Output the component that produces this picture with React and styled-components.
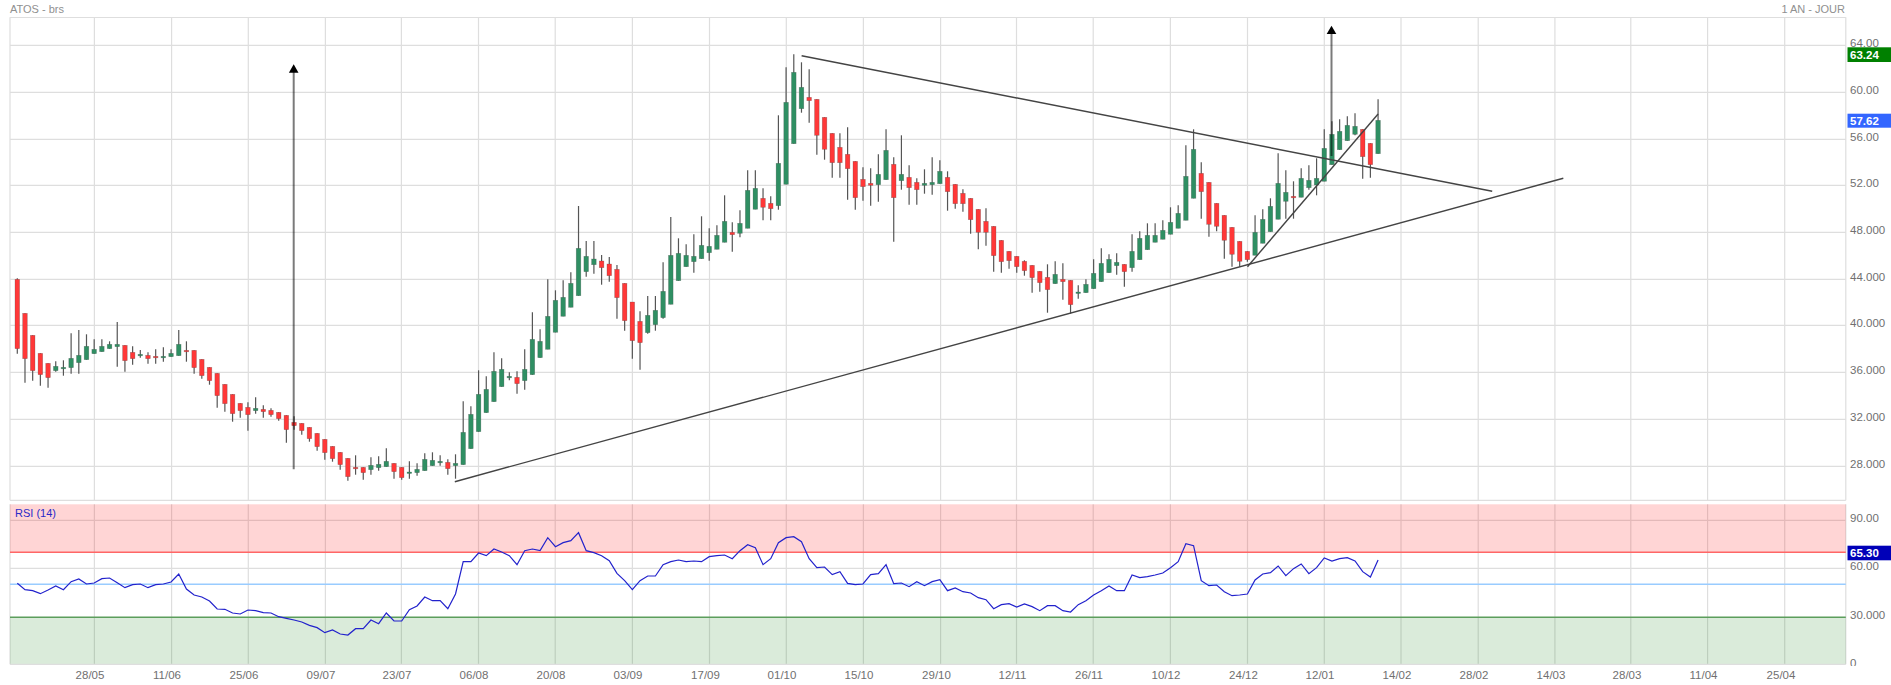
import React from "react";
import styled, { createGlobalStyle } from "styled-components";

const GlobalStyle = createGlobalStyle`
  html, body {
    margin: 0;
    padding: 0;
    background: #fff;
    overflow: hidden;
  }
`;

const Page = styled.div`
  width: 1891px;
  height: 685px;
  display: flex;
  flex-direction: column;
  font-family: "Liberation Sans", Arial, sans-serif;
`;

const Header = styled.div`
  height: 17px;
  display: flex;
  align-items: center;
  justify-content: space-between;
  padding: 0 46px 0 10px;
  font-size: 11px;
  color: #909090;
`;

const Panel = styled.svg`
  display: block;
  flex: none;
  font-family: "Liberation Sans", Arial, sans-serif;
`;

const GridLine = styled.line`
  stroke: #dedede;
  stroke-width: 1.2;
`;

const Band = styled.rect`
  fill: ${(p) => (p.$tone === "red" ? "rgba(255,0,0,.165)" : "rgba(0,120,0,.145)")};
`;

const Level = styled.line`
  stroke: ${(p) => p.$color};
  stroke-width: 1.4;
`;

const Wick = styled.line`
  stroke: #555;
  stroke-width: 1.2;
`;

const Body = styled.rect`
  fill: ${(p) => (p.$up ? "#2f8f63" : "#ff3838")};
  stroke: rgba(70, 70, 70, 0.4);
  stroke-width: 0.6;
`;

const TrendLine = styled.line`
  stroke: #444;
  stroke-width: 1.4;
`;

const ArrowShaft = styled.line`
  stroke: rgba(0, 0, 0, 0.52);
  stroke-width: 2;
`;

const AxisLabel = styled.text`
  fill: #707070;
  font-size: 11.5px;
`;

const BadgeBox = styled.rect`
  fill: ${(p) => p.$color};
`;

const BadgeText = styled.text`
  fill: #fff;
  font-size: 11.5px;
  font-weight: bold;
`;

const RsiTitle = styled.text`
  fill: #2a2ac8;
  font-size: 11px;
`;

const RsiTrace = styled.polyline`
  fill: none;
  stroke: #2222cc;
  stroke-width: 1.2;
`;

const LEFT = 10;
const RIGHT = 1845.8;
const TOP = 17.3;
const BOTTOM = 500.3;
const RSI_TOP = 504.3;
const RSI_BOTTOM = 664.3;

const barX = (i) => 17.3 + 7.688 * i;

const verticals = [
  LEFT, 94.4, 171.6, 248.3, 325.4, 401.4, 478.5, 555.2, 632.4, 709.5, 786.3,
  863.4, 940.6, 1016.5, 1093.2, 1170.4, 1247.5, 1324.3, 1401, 1478.2, 1554.9,
  1630.8, 1707.6, 1784.7, RIGHT,
];

const priceLevels = [
  ["64.00", 45.3], ["60.00", 92.3], ["56.00", 139.3], ["52.00", 185.3],
  ["48.000", 232.3], ["44.000", 279.3], ["40.000", 325.3], ["36.000", 372.3],
  ["32.000", 419.3], ["28.000", 466.3],
];

const rsiLevels = [
  ["90.00", 520.3], ["60.00", 568.3], ["30.000", 617], ["0", 664.5],
];

const dates = [
  ["28/05", 90], ["11/06", 167], ["25/06", 244], ["09/07", 321], ["23/07", 397],
  ["06/08", 474], ["20/08", 551], ["03/09", 628], ["17/09", 705.5], ["01/10", 782],
  ["15/10", 859], ["29/10", 936.5], ["12/11", 1012.5], ["26/11", 1089], ["10/12", 1166],
  ["24/12", 1243.5], ["12/01", 1320], ["14/02", 1397], ["28/02", 1474], ["14/03", 1551],
  ["28/03", 1627], ["11/04", 1703.5], ["25/04", 1781],
];

// up, wick top, body top, body bottom, wick bottom (page y)
const candles = [
  [0,278.3,279.3,348.7,353.7],[0,313.3,313.3,358.7,382.7],[0,335.3,335.3,370.7,380.7],[0,353.3,353.3,374.7,385.7],
  [0,363.3,363.3,377.7,387.7],[1,361.3,366.3,370.7,371.7],[1,360.3,367.3,368.7,375.7],[1,333.3,358.3,367.7,373.7],
  [1,330,355.3,362.7,373.7],[1,334.3,346.3,359.7,359.7],[1,339.3,349.3,353.7,353.7],[1,339.3,346.3,351.7,351.7],
  [1,341.3,344.3,348.7,348.7],[1,322,344.3,346.7,366.7],[0,345.3,345.3,360.7,371.7],[0,346.3,352.3,358.7,364.7],
  [1,350,354.3,355.7,357.7],[0,352.3,355.3,358.7,363.7],[0,349.3,356.3,357.7,363.7],[1,347.3,356.3,357.7,361.7],
  [1,349.3,353.3,356.7,356.7],[1,330,344.3,355.7,355.7],[0,341.3,350.3,351.7,361.7],[0,350.3,350.3,367.7,373.7],
  [0,359.3,359.3,375.7,378.7],[0,367.3,367.3,380.7,384.7],[0,373.3,373.3,395.7,407.7],[0,384.3,384.3,403.7,411.7],
  [0,394.3,394.3,413.7,421.7],[0,403.3,403.3,410.7,417.7],[0,402.3,407.3,414.7,430.7],[1,397.3,408.3,410.7,413.7],
  [0,405.3,409.3,411.7,417.7],[0,408.3,410.3,414.7,416.7],[0,412.3,412.3,418.7,420.7],[0,415.3,415.3,429.7,442.7],
  [0,416.3,422.3,425.7,429.7],[0,423.3,423.3,430.7,434.7],[0,427.3,427.3,438.7,441.7],[0,433.3,433.3,446.7,450.7],
  [0,439.3,439.3,452.7,459.7],[0,446.3,446.3,458.7,461.7],[0,452.3,452.3,464.7,469.7],[0,458.3,458.3,476.7,480.7],
  [0,455.3,467.3,468.7,474.7],[0,467.3,467.3,472.7,479.7],[1,457.3,465.3,469.7,474.7],[1,456.3,464.3,467.7,470.7],
  [1,448.3,461.3,466.7,466.7],[0,463.3,463.3,471.7,478.7],[0,467.3,467.3,477.7,479.7],[1,461.3,472,472.7,478.7],
  [1,463.3,469.3,472.7,475.7],[1,453.3,459.3,470.7,470.7],[1,452.3,460.3,465.7,465.7],[1,455.3,461.3,462.7,465.7],
  [0,459.3,462.3,468.7,474.7],[1,454.3,463.3,465.7,478.7],[1,401.3,432.3,464.7,464.7],[1,406.3,414.3,448.7,448.7],
  [1,370.3,394.3,431.7,431.7],[1,376.3,389.3,412.7,412.7],[1,352.3,371.3,401.7,401.7],[1,358.3,369.3,386.7,386.7],
  [1,372.3,376.3,377.7,380.3],[0,371.3,377.3,383.7,393.7],[1,349.3,369.3,380.7,389.7],[1,312.3,339.3,374.7,374.7],
  [1,329.3,341.3,357.7,357.7],[1,279.3,316.3,349.3,349.3],[1,290.3,300.3,332.3,332.3],[1,280.3,297.3,316.3,316.3],
  [1,272.3,283.3,307.3,307.3],[1,206,248.3,295.7,295.7],[1,241,256.3,271.7,276.7],[1,241,259,264.7,273.7],
  [0,255,261,267.7,284.7],[0,257,264,275.7,281.7],[0,265,269.3,297.7,318.7],[0,283.3,283.3,320.7,330.7],
  [0,302,302,340.7,358.7],[0,311.3,321.3,342.7,369.7],[1,296,315.3,332.7,333.7],[1,296,310.3,324.7,330.7],
  [1,262.3,291.3,317.7,318.7],[1,217,255.3,304.3,304.3],[1,238.3,253.3,280.7,280.7],[1,244.3,255.3,266.7,266.7],
  [1,234.3,256.3,261.7,272.7],[1,216.3,245.3,258.7,258.7],[1,228.3,246.3,252.7,260.7],[1,225.3,235.3,249.3,249.3],
  [1,195.3,221.3,242.3,242.3],[0,222.3,232.3,234.7,251.7],[1,210.3,223.3,233.3,237.3],[1,170.3,190.3,228.3,228.3],
  [1,170.3,188.3,209.3,209.3],[0,188.3,198.3,207.3,220.3],[0,196.3,203.3,208.7,220.3],[1,115.3,163.3,205.7,209.7],
  [1,67.3,102.3,184.3,184.3],[1,54.3,72.3,143.7,143.7],[1,62.3,87.3,108.7,112.7],[0,69.3,97.3,100.7,122.7],
  [0,99.3,99.3,135.3,154.7],[0,117.3,117.3,149.3,159.7],[0,133.3,133.3,162.7,177.7],[0,133.3,147.3,162.7,177.7],
  [0,127.3,154.3,168.7,199.7],[0,161.3,161.3,197.7,209.7],[0,167.3,179.3,186.7,200.7],[0,168.3,183.3,185.3,205.7],
  [1,154.3,174.3,184.7,201.7],[1,129.3,150.3,179.7,179.7],[0,157.3,164.3,197.7,241.7],[1,135.3,174.3,180.7,189.7],
  [0,165.3,177.3,187.7,204.7],[0,178.3,182.3,189.7,204.7],[1,169.3,183.3,185.3,193.7],[1,157.3,182.3,184.7,194.7],
  [1,160.3,171.3,183.7,183.7],[0,171.3,177.3,191.7,210.7],[0,184.3,184.3,203.7,208.7],[0,189.3,193.3,203.7,211.7],
  [0,198.3,198.3,219.7,233.7],[0,209.3,209.3,232.3,249.3],[0,208.3,221.3,232.3,245.7],[0,226.3,226.3,255.7,271.7],
  [0,240.3,240.3,261.7,272.7],[0,251.3,251.3,260.7,268.7],[0,256.3,256.3,266.7,272.7],[0,260.3,261.3,270.7,275.7],
  [0,265.3,265.3,277.7,292.7],[0,271.3,271.3,282.7,291.7],[0,264.3,277.3,289.7,312.7],[1,261.3,274.3,283.7,283.7],
  [0,263.3,279.3,281.7,299.7],[0,280.3,280.3,304.7,313.7],[1,285.3,292,292.7,298.7],[1,279.3,284.3,292.7,292.7],
  [1,259.3,273.3,288.7,288.7],[1,248.3,263.3,281.7,281.7],[1,254.3,259.3,272.7,272.7],[1,253.3,262.3,265.7,274.7],
  [0,264.3,264.3,271.7,286.7],[1,234.3,251.3,267.7,271.7],[1,231.3,238.3,259.7,259.7],[1,223.3,235.3,249.7,249.7],
  [1,223.3,235.3,242.3,242.3],[1,220.3,230.3,239.3,239.3],[1,207.3,222.3,234.3,234.3],[1,205.3,213.3,228.3,228.3],
  [1,145.3,176.3,220.3,220.3],[1,129.3,149.3,198.3,198.3],[0,162.3,173.3,191.7,218.7],[0,182.3,182.3,224.3,236.7],
  [0,203.3,203.3,226.3,231.3],[0,215.3,215.3,240.3,258.7],[0,227.3,227.3,254.3,266.7],[0,241.3,241.3,261.3,266.7],
  [0,251.3,251.3,259.7,261.7],[1,215.3,232.3,255.3,255.3],[1,209.3,219.3,243.3,243.3],[1,198.3,206.3,231.7,231.7],
  [1,153.3,183.3,219.3,219.3],[1,170.3,192.3,201.3,218.7],[0,181.3,196.3,197.7,218.7],[1,168.3,178.3,197.3,197.3],
  [1,165.3,180.3,187.7,189.7],[1,158.3,178.3,185,195.3],[1,129.3,148.3,181.3,181.3],[1,121.3,134.3,164.7,164.7],
  [1,119.3,131.3,149.7,149.7],[1,116.3,125.3,140.7,140.7],[1,113.3,126.3,134.3,135.3],[0,129.3,129.3,156.7,178.7],
  [0,143.3,143.3,164.7,177.7],[1,99.3,120.3,153.7,153.7],
];

const trendLines = [
  [454.8, 481.7, 1563.3, 178.3],
  [801.6, 55.7, 1492.2, 191.3],
  [1247.5, 266.7, 1378.1, 114],
];

const arrows = [
  [293.7, 469.3, 64.3],
  [1331.5, 156, 25.7],
];

// trace height in thirds of a pixel below y = 490
const rsiTrace = [
  280,299,302,311,300,288,299,275,267,282,279,266,264,278,293,284,282,293,284,282,
  276,252,297,315,321,333,357,358,369,372,360,362,368,369,380,385,390,396,406,413,
  428,420,432,435,416,416,390,401,369,393,393,359,348,321,332,332,356,312,215,215,
  189,197,177,186,197,224,182,177,182,143,170,158,152,128,182,188,197,212,250,272,
  299,272,258,258,224,215,210,215,213,215,200,197,195,206,182,164,173,224,206,158,
  143,140,155,206,233,231,254,245,280,284,282,254,251,224,281,279,290,275,287,275,
  269,302,294,305,309,323,329,356,344,341,351,342,350,362,347,347,362,366,344,332,
  315,302,288,302,302,255,263,260,255,249,233,215,161,167,272,287,285,305,317,315,
  312,270,252,248,228,257,236,222,251,233,204,213,206,203,213,245,261,210,
];

const Candle = ({ i, data }) => {
  const [up, wickTop, bodyTop, bodyBottom, wickBottom] = data;
  const x = barX(i);
  return (
    <g>
      <Wick x1={x} x2={x} y1={wickTop} y2={wickBottom} />
      <Body $up={up === 1} x={x - 2.3} width={4.6} y={bodyTop} height={Math.max(bodyBottom - bodyTop, 1.5)} />
    </g>
  );
};

const Arrow = ({ x, from, to }) => (
  <g>
    <ArrowShaft x1={x} x2={x} y1={from} y2={to + 6} />
    <polygon points={`${x},${to} ${x - 4.8},${to + 8.4} ${x + 4.8},${to + 8.4}`} fill="#000" />
  </g>
);

const Badge = ({ y, height, color, children }) => (
  <g>
    <BadgeBox $color={color} x={1847.5} y={y} width={43.5} height={height} />
    <BadgeText x={1850} y={y + height / 2 + 4}>{children}</BadgeText>
  </g>
);

const PriceChart = () => (
  <Panel width="1891" height="485" viewBox="0 17 1891 485">
    {priceLevels.map(([, y]) => (
      <GridLine key={y} x1={LEFT} x2={RIGHT} y1={y} y2={y} />
    ))}
    <GridLine x1={LEFT} x2={RIGHT} y1={TOP} y2={TOP} />
    <GridLine x1={LEFT} x2={RIGHT} y1={BOTTOM} y2={BOTTOM} />
    {verticals.map((x) => (
      <GridLine key={x} x1={x} x2={x} y1={TOP} y2={BOTTOM} />
    ))}
    {candles.map((c, i) => (
      <Candle key={i} i={i} data={c} />
    ))}
    {trendLines.map(([x1, y1, x2, y2]) => (
      <TrendLine key={x1} x1={x1} y1={y1} x2={x2} y2={y2} />
    ))}
    {arrows.map(([x, from, to]) => (
      <Arrow key={x} x={x} from={from} to={to} />
    ))}
    {priceLevels.map(([label, y]) => (
      <AxisLabel key={label} x={1850} y={y + 1.6}>{label}</AxisLabel>
    ))}
    <Badge y={47.3} height={14.7} color="#008000">63.24</Badge>
    <Badge y={113.7} height={14} color="#3366ff">57.62</Badge>
  </Panel>
);

const RsiChart = () => {
  const points = rsiTrace.map((v, i) => `${barX(i)},${490 + v / 3}`).join(" ");
  return (
    <Panel width="1891" height="183" viewBox="0 502 1891 183">
      <defs>
        <clipPath id="rsi-axis">
          <rect x="1846" y="502" width="45" height="164" />
        </clipPath>
      </defs>
      {rsiLevels.slice(0, 2).map(([, y]) => (
        <GridLine key={y} x1={LEFT} x2={RIGHT} y1={y} y2={y} />
      ))}
      {verticals.map((x) => (
        <GridLine key={x} x1={x} x2={x} y1={RSI_TOP} y2={RSI_BOTTOM} />
      ))}
      <Band $tone="red" x={LEFT} y={RSI_TOP} width={RIGHT - LEFT} height={48} />
      <Band $tone="green" x={LEFT} y={617.3} width={RIGHT - LEFT} height={RSI_BOTTOM - 617.3} />
      <GridLine x1={LEFT} x2={RIGHT} y1={RSI_BOTTOM} y2={RSI_BOTTOM} />
      <Level $color="#ff6666" x1={LEFT} x2={RIGHT} y1={552.3} y2={552.3} />
      <Level $color="#99ccff" x1={LEFT} x2={RIGHT} y1={584.3} y2={584.3} />
      <Level $color="#5c9e5c" x1={LEFT} x2={RIGHT} y1={617.3} y2={617.3} />
      <RsiTrace points={points} />
      <RsiTitle x={15} y={517}>RSI (14)</RsiTitle>
      <g clipPath="url(#rsi-axis)">
        {rsiLevels.map(([label, y]) => (
          <AxisLabel key={label} x={1850} y={y + 2}>{label}</AxisLabel>
        ))}
      </g>
      <Badge y={545.7} height={14.6} color="#0000b8">65.30</Badge>
      {dates.map(([label, x]) => (
        <AxisLabel key={label} x={x} y={679} textAnchor="middle">{label}</AxisLabel>
      ))}
    </Panel>
  );
};

export default function App() {
  return (
    <Page>
      <GlobalStyle />
      <Header>
        <span>ATOS - brs</span>
        <span>1 AN - JOUR</span>
      </Header>
      <PriceChart />
      <RsiChart />
    </Page>
  );
}
